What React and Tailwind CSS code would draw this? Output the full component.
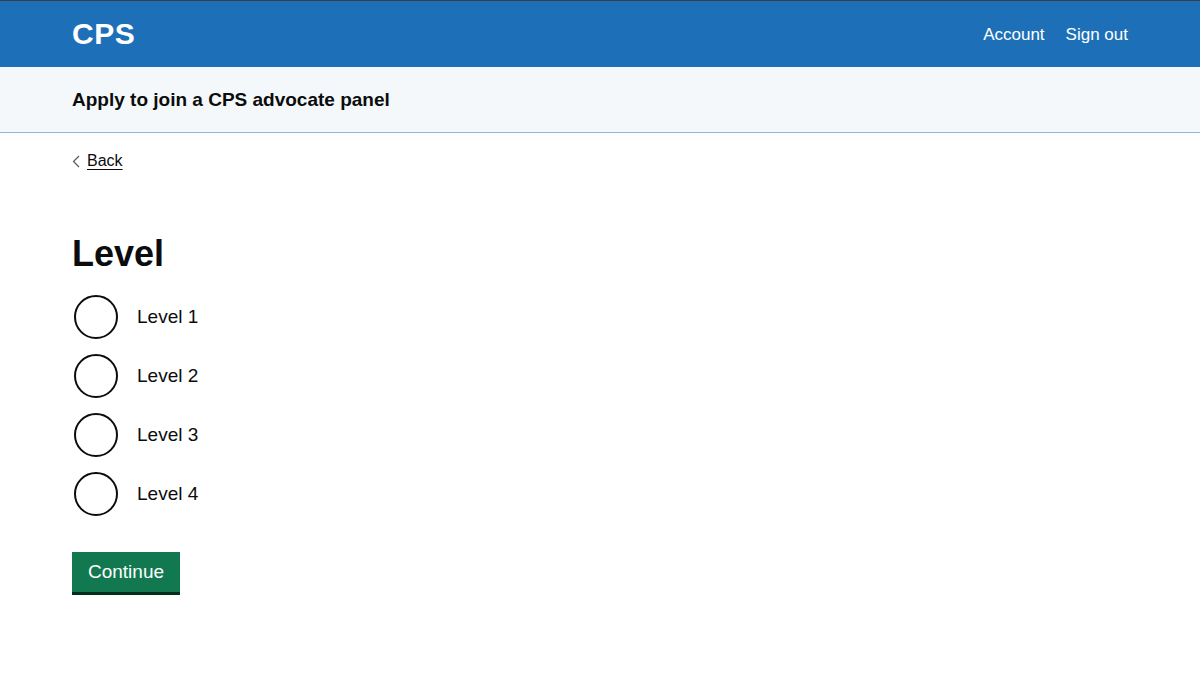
import React, { useState } from 'react';

const levels = ['Level 1', 'Level 2', 'Level 3', 'Level 4'];

const App = () => {
  const [selected, setSelected] = useState(null);

  return (
    <div className="min-h-screen bg-white text-[#0b0c0c] font-['Liberation_Sans',Arial,sans-serif]">
      {/* Header */}
      <header className="border-t border-[#383f43] bg-[#1d70b8]">
        <div className="h-[66px] px-[72px] flex items-center justify-between">
          <a href="#" className="text-white text-[30px] font-bold leading-none tracking-[0.5px]">
            CPS
          </a>
          <nav className="flex items-center gap-[21px] text-white text-[17px] leading-none">
            <a href="#">Account</a>
            <a href="#">Sign out</a>
          </nav>
        </div>
      </header>

      {/* Service name bar */}
      <div className="bg-[#f4f8fb] border-b border-[#8eb8dc]">
        <div className="h-[65px] px-[72px] flex items-center">
          <span className="text-[19px] font-bold leading-none">Apply to join a CPS advocate panel</span>
        </div>
      </div>

      <div className="px-[72px]">
        {/* Back link */}
        <a href="#" className="mt-[18px] inline-flex items-center gap-[7px] text-[16px] leading-[20px] text-[#0b0c0c]">
          <svg width="8" height="13" viewBox="0 0 8 13" className="text-[#505a5f]">
            <path d="M7 1 L1.5 6.5 L7 12" fill="none" stroke="currentColor" strokeWidth="1.2" />
          </svg>
          <span className="underline underline-offset-[3px] decoration-1">Back</span>
        </a>

        <main className="mt-[59px]">
          <h1 className="text-[36px] font-bold leading-[40px]">Level</h1>

          {/* Radios */}
          <div className="mt-[21px] flex flex-col gap-[15px]">
            {levels.map((level) => (
              <label key={level} className="flex items-center h-[44px] cursor-pointer">
                <span className="ml-[2px] w-[44px] h-[44px] rounded-full border-2 border-[#0b0c0c] flex items-center justify-center">
                  {selected === level && <span className="w-[20px] h-[20px] rounded-full bg-[#0b0c0c]" />}
                </span>
                <input
                  type="radio"
                  name="level"
                  className="sr-only"
                  checked={selected === level}
                  onChange={() => setSelected(level)}
                />
                <span className="ml-[19px] text-[19px] leading-none">{level}</span>
              </label>
            ))}
          </div>

          <button className="mt-[36px] w-[108px] h-[40px] bg-[#11784f] text-white text-[19px] leading-none flex items-center justify-center shadow-[0_3px_0_#00301a]">
            Continue
          </button>
        </main>
      </div>
    </div>
  );
};

export default App;
